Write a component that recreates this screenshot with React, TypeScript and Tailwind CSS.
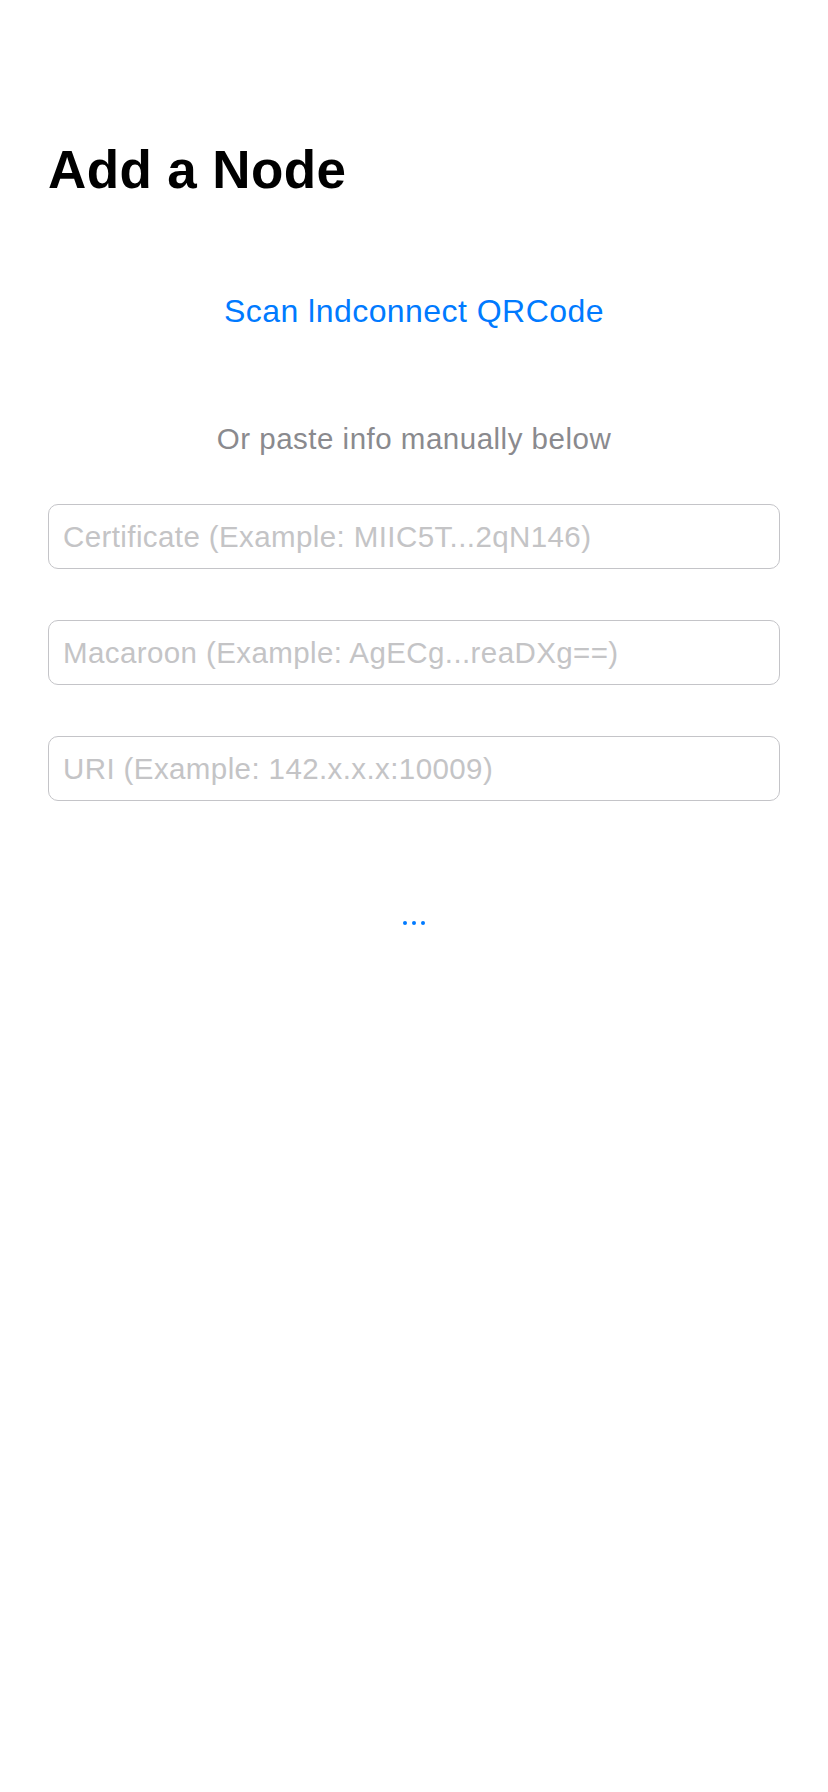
import { useState } from "react";

// ============================================
// Add a Node screen
// ============================================

const FIELDS = [
  { key: "cert", placeholder: "Certificate (Example: MIIC5T...2qN146)" },
  { key: "macaroon", placeholder: "Macaroon (Example: AgECg...reaDXg==)" },
  { key: "uri", placeholder: "URI (Example: 142.x.x.x:10009)" },
];

export default function App() {
  const [values, setValues] = useState<Record<string, string>>({ cert: "", macaroon: "", uri: "" });

  return (
    <div className="min-h-[1792px] w-[828px] bg-white px-12 pt-[138px] font-['Liberation_Sans',Arial,sans-serif]">
      {/* 헤더 */}
      <h1 className="text-[53px] leading-[64px] font-bold tracking-[0.4px] text-black">Add a Node</h1>

      {/* QR 스캔 */}
      <div className="mt-[89px] flex justify-center">
        <button className="text-[32px] leading-[40px] tracking-[0.45px] text-[#007aff]">
          Scan lndconnect QRCode
        </button>
      </div>

      <p className="mt-[90px] text-center text-[29.5px] leading-[36px] tracking-[0.5px] text-[#8a8a8e]">
        Or paste info manually below
      </p>

      {/* 입력 */}
      <div className="mt-[47px] flex flex-col gap-[51px]">
        {FIELDS.map((f) => (
          <input
            key={f.key}
            type="text"
            value={values[f.key]}
            onChange={(e) => setValues((prev) => ({ ...prev, [f.key]: e.target.value }))}
            placeholder={f.placeholder}
            className="h-[65px] w-full rounded-[10px] border-[1.5px] border-[#c4c4c8] px-[14px] text-[29.5px] tracking-[0.4px] text-black outline-none placeholder:text-[#c4c4c6]"
          />
        ))}
      </div>

      {/* 로딩 표시 */}
      <div className="mt-[120px] flex justify-center gap-[5px]">
        <span className="h-[4px] w-[4px] rounded-full bg-[#007aff]" />
        <span className="h-[4px] w-[4px] rounded-full bg-[#007aff]" />
        <span className="h-[4px] w-[4px] rounded-full bg-[#007aff]" />
      </div>
    </div>
  );
}
